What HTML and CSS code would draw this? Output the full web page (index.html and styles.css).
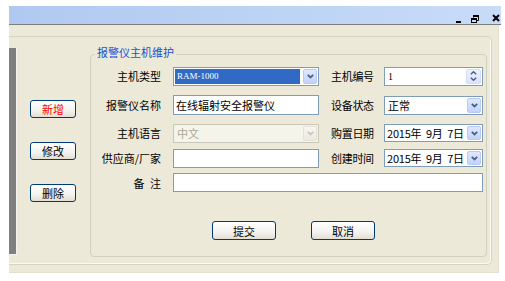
FILE: index.html
```html
<!DOCTYPE html>
<html lang="zh-CN">
<head>
    <meta charset="UTF-8">
    <title>报警仪主机维护</title>
    <link rel="stylesheet" href="styles.css">
</head>
<body>
    <div class="titlebar">
        <svg class="ctl ctl-min" width="5" height="8" viewBox="0 0 5 8"><rect x="0" y="6" width="5" height="2" fill="#000"/></svg>
        <svg class="ctl ctl-restore" width="8" height="8" viewBox="0 0 8 8" fill="none" stroke="#000">
            <path d="M2.5 2.5V0.5H7.5V5.5H5.5" />
            <rect x="2" y="0" width="6" height="2" fill="#000" stroke="none"/>
            <rect x="0.5" y="3.5" width="5" height="4" />
            <rect x="0" y="3" width="6" height="2" fill="#000" stroke="none"/>
        </svg>
        <svg class="ctl ctl-close" width="8" height="8" viewBox="0 0 8 8"><path d="M1 1L7 7M7 1L1 7" stroke="#000" stroke-width="2"/></svg>
    </div>

    <div class="window">
        <div class="frame">
            <div class="sidebar"></div>

            <div class="actions">
                <button class="btn btn-add">新增</button>
                <button class="btn">修改</button>
                <button class="btn">删除</button>
            </div>

            <fieldset class="group">
                <legend>报警仪主机维护</legend>
                <div class="form-grid">
                    <label class="lbl">主机类型</label>
                    <div class="combo">
                        <span class="combo-text selected">RAM-1000</span>
                        <span class="combo-btn"><svg width="7" height="5" viewBox="0 0 7 5"><path d="M0.8 0.8L3.5 3.5L6.2 0.8" fill="none" stroke="#4d6185" stroke-width="1.8"/></svg></span>
                    </div>
                    <label class="lbl-r">主机编号</label>
                    <div class="spin">
                        <span class="spin-text">1</span>
                        <span class="spin-btn">
                            <svg width="7" height="4" viewBox="0 0 7 4"><path d="M0.8 3.3L3.5 0.8L6.2 3.3" fill="none" stroke="#4d6185" stroke-width="1.5"/></svg>
                            <svg width="7" height="4" viewBox="0 0 7 4"><path d="M0.8 0.7L3.5 3.2L6.2 0.7" fill="none" stroke="#4d6185" stroke-width="1.5"/></svg>
                        </span>
                    </div>

                    <label class="lbl">报警仪名称</label>
                    <div class="input input-tall">在线辐射安全报警仪</div>
                    <label class="lbl-r">设备状态</label>
                    <div class="combo">
                        <span class="combo-text">正常</span>
                        <span class="combo-btn"><svg width="7" height="5" viewBox="0 0 7 5"><path d="M0.8 0.8L3.5 3.5L6.2 0.8" fill="none" stroke="#4d6185" stroke-width="1.8"/></svg></span>
                    </div>

                    <label class="lbl">主机语言</label>
                    <div class="combo combo-disabled">
                        <span class="combo-text">中文</span>
                        <span class="combo-btn"><svg width="7" height="5" viewBox="0 0 7 5"><path d="M0.8 0.8L3.5 3.5L6.2 0.8" fill="none" stroke="#c9c7ba" stroke-width="1.8"/></svg></span>
                    </div>
                    <label class="lbl-r">购置日期</label>
                    <div class="combo combo-date">
                        <span class="combo-text">2015年&nbsp; 9月&nbsp; 7日</span>
                        <span class="combo-btn"><svg width="7" height="5" viewBox="0 0 7 5"><path d="M0.8 0.8L3.5 3.5L6.2 0.8" fill="none" stroke="#4d6185" stroke-width="1.8"/></svg></span>
                    </div>

                    <label class="lbl">供应商/厂家</label>
                    <div class="input"></div>
                    <label class="lbl-r">创建时间</label>
                    <div class="combo combo-date">
                        <span class="combo-text">2015年&nbsp; 9月&nbsp; 7日</span>
                        <span class="combo-btn"><svg width="7" height="5" viewBox="0 0 7 5"><path d="M0.8 0.8L3.5 3.5L6.2 0.8" fill="none" stroke="#4d6185" stroke-width="1.8"/></svg></span>
                    </div>

                    <label class="lbl">备&ensp;注</label>
                    <div class="input input-wide"></div>
                </div>

                <div class="form-buttons">
                    <button class="btn btn-wide">提交</button>
                    <button class="btn btn-wide">取消</button>
                </div>
            </fieldset>
        </div>
    </div>
</body>
</html>
```

FILE: styles.css
```css
/* Base */
body {
    margin: 0;
    background-color: #fff;
    font-family: "Noto Sans CJK SC", "Liberation Sans", sans-serif;
    font-size: 11px;
    color: #000;
}

/* Title bar */
.titlebar {
    margin: 6px 4px 0 9px;
    height: 17px;
    border-bottom: 1px solid #7d7d7d;
    background: linear-gradient(to right, #b0c9f0, #c8dcf8);
    display: flex;
    justify-content: flex-end;
    align-items: flex-end;
    padding: 0 1px 1px 0;
}

.ctl {
    display: block;
}

.ctl-restore {
    margin-left: 10px;
}

.ctl-close {
    margin-left: 13px;
    margin-bottom: 1px;
}

/* Window */
.window {
    margin-left: 9px;
    width: 490px;
    height: 248px;
    box-sizing: border-box;
    background-color: #ece9d8;
    padding-top: 11px;
    border-bottom: 1px solid #e2dfcf;
    border-right: 1px solid #e2dfcf;
}

.frame {
    display: flex;
    width: 483px;
    height: 229px;
    box-sizing: border-box;
    border: 1px solid #d6d3c3;
    border-left: none;
    border-radius: 0 5px 5px 0;
    box-shadow: inset -1px -1px 0 #fbfaf6;
}

.sidebar {
    width: 7px;
    height: 206px;
    margin-top: 11px;
    background-color: #7f7f7f;
    border-right: 1px solid #f4f3ee;
    border-bottom: 1px solid #f4f3ee;
}

/* Left buttons */
.actions {
    display: flex;
    flex-direction: column;
    gap: 24px;
    padding: 63px 0 0 13px;
}

.btn {
    width: 46px;
    height: 18px;
    padding: 0;
    border: 1px solid #003c74;
    border-radius: 3px;
    background: linear-gradient(#ffffff, #f3f2ee 60%, #e2ded3);
    font-family: "Noto Sans CJK SC", sans-serif;
    font-size: 11px;
    line-height: 14px;
    color: #000;
}

.btn-add {
    color: #ff0000;
}

.btn-wide {
    width: 64px;
    height: 19px;
}

/* Group box */
.group {
    margin: 9px 0 0 14px;
    padding: 0;
    width: 397px;
    height: 211px;
    box-sizing: border-box;
    border: 1px solid #d0d0bf;
    border-radius: 4px;
}

.group legend {
    margin-left: 4px;
    padding: 0 2px 4px;
    color: #1a4dd6;
    font-size: 11px;
    line-height: 12px;
}

.form-grid {
    display: grid;
    grid-template-columns: 70px 146px 41px 99px;
    grid-template-rows: 28px 30px 26px 24px 25px;
    column-gap: 12px;
    align-items: center;
}

.lbl {
    text-align: right;
    white-space: nowrap;
}

.lbl-r {
    white-space: nowrap;
    letter-spacing: -0.3px;
}

.input {
    height: 19px;
    box-sizing: border-box;
    border: 1px solid #7f9db9;
    background-color: #fff;
    padding-left: 2px;
    line-height: 17px;
}

.input-tall {
    height: 20px;
    line-height: 18px;
}

.input-wide {
    grid-column: 2 / 5;
}

/* Combo boxes */
.combo {
    display: flex;
    height: 19px;
    box-sizing: border-box;
    border: 1px solid #7f9db9;
    background-color: #fff;
    padding: 1px;
    gap: 3px;
}

.combo-text {
    flex: 1;
    padding-left: 2px;
    line-height: 15px;
    white-space: nowrap;
}

.combo-text.selected {
    background-color: #316ac5;
    color: #fff;
    font-family: "Liberation Serif", serif;
    font-size: 9px;
    padding-left: 2px;
}

.combo-btn {
    width: 14px;
    display: flex;
    align-items: center;
    justify-content: center;
    border: 1px solid #b9c9ef;
    border-radius: 2px;
    box-sizing: border-box;
    background: linear-gradient(#dfe8fd, #c2d3fb);
}

.combo-date {
    height: 18px;
}

.combo-date .combo-text {
    padding-left: 1px;
    line-height: 14px;
    letter-spacing: -0.2px;
}

.combo-disabled {
    border-color: #c9c7ba;
    background-color: #f5f4ea;
    color: #aca899;
}

.combo-disabled .combo-btn {
    border-color: #e4e2d8;
    background: linear-gradient(#f7f6f1, #ece9e0);
}

/* Spin box */
.spin {
    display: flex;
    height: 19px;
    box-sizing: border-box;
    border: 1px solid #7f9db9;
    background-color: #fff;
    padding: 1px;
}

.spin-text {
    flex: 1;
    padding-left: 2px;
    font-family: "Liberation Serif", serif;
    font-size: 10px;
    line-height: 15px;
}

.spin-btn {
    width: 13px;
    display: flex;
    flex-direction: column;
    align-items: center;
    justify-content: center;
    gap: 2px;
    border: 1px solid #d3ddf5;
    border-radius: 2px;
    background: linear-gradient(#edf2fd, #d9e3fb);
}

/* Submit / cancel */
.form-buttons {
    display: flex;
    gap: 35px;
    padding: 26px 0 0 121px;
}
```
